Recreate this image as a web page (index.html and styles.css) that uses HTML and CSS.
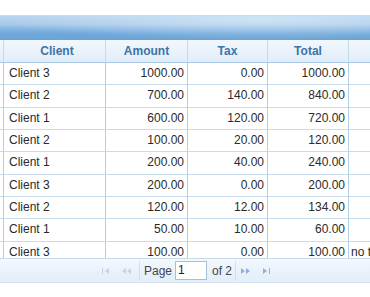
FILE: index.html
```html
<!DOCTYPE html>
<html>
<head>
<meta charset="utf-8">
<link rel="stylesheet" href="styles.css">
</head>
<body>
<div class="grid">
  <div class="caption"></div>
  <div class="hrow">
    <div class="hc c0"></div>
    <div class="hc c1">Client</div>
    <div class="hc c2">Amount</div>
    <div class="hc c3">Tax</div>
    <div class="hc c4">Total</div>
    <div class="hc c5"></div>
  </div>
  <div class="body">
    <div class="row"><div class="c c0"></div><div class="c c1">Client 3</div><div class="c c2">1000.00</div><div class="c c3">0.00</div><div class="c c4">1000.00</div><div class="c c5"></div></div>
    <div class="row"><div class="c c0"></div><div class="c c1">Client 2</div><div class="c c2">700.00</div><div class="c c3">140.00</div><div class="c c4">840.00</div><div class="c c5"></div></div>
    <div class="row"><div class="c c0"></div><div class="c c1">Client 1</div><div class="c c2">600.00</div><div class="c c3">120.00</div><div class="c c4">720.00</div><div class="c c5"></div></div>
    <div class="row"><div class="c c0"></div><div class="c c1">Client 2</div><div class="c c2">100.00</div><div class="c c3">20.00</div><div class="c c4">120.00</div><div class="c c5"></div></div>
    <div class="row"><div class="c c0"></div><div class="c c1">Client 1</div><div class="c c2">200.00</div><div class="c c3">40.00</div><div class="c c4">240.00</div><div class="c c5"></div></div>
    <div class="row"><div class="c c0"></div><div class="c c1">Client 3</div><div class="c c2">200.00</div><div class="c c3">0.00</div><div class="c c4">200.00</div><div class="c c5"></div></div>
    <div class="row"><div class="c c0"></div><div class="c c1">Client 2</div><div class="c c2">120.00</div><div class="c c3">12.00</div><div class="c c4">134.00</div><div class="c c5"></div></div>
    <div class="row"><div class="c c0"></div><div class="c c1">Client 1</div><div class="c c2">50.00</div><div class="c c3">10.00</div><div class="c c4">60.00</div><div class="c c5"></div></div>
    <div class="row"><div class="c c0"></div><div class="c c1">Client 3</div><div class="c c2">100.00</div><div class="c c3">0.00</div><div class="c c4">100.00</div><div class="c c5">no tax at all</div></div>
  </div>
  <div class="pager">
    <div class="pg">
      <span class="ic dis"><svg width="10" height="8" viewBox="0 0 10 8"><rect x="1" y="1" width="1" height="6" fill="currentColor"/><path d="M8 1 L4 4 L8 7 Z" fill="currentColor"/></svg></span>
      <span class="ic dis"><svg width="12" height="8" viewBox="0 0 12 8"><path d="M6 1 L2 4 L6 7 Z M11 1 L7 4 L11 7 Z" fill="currentColor"/></svg></span>
      <span class="sep s1"></span>
      <span class="lbl">Page</span>
      <span class="inp">1</span>
      <span class="lbl">of 2</span>
      <span class="sep s2"></span>
      <span class="ic en"><svg width="12" height="8" viewBox="0 0 12 8"><path d="M1 1 L5 4 L1 7 Z M6 1 L10 4 L6 7 Z" fill="currentColor"/></svg></span>
      <span class="ic en"><svg width="10" height="8" viewBox="0 0 10 8"><path d="M2 1 L6 4 L2 7 Z" fill="currentColor"/><rect x="8" y="1" width="1" height="6" fill="currentColor"/></svg></span>
    </div>
  </div>
</div>
</body>
</html>
```
FILE: styles.css
```css
html, body {
  margin: 0;
  padding: 0;
  background: #ffffff;
}
body {
  width: 370px;
  height: 297px;
  overflow: hidden;
  font-family: "Liberation Sans", Arial, sans-serif;
  font-size: 12px;
}
.grid {
  margin-top: 15px;
  border-top: 1px solid #c9dcee;
}
.caption {
  height: 24px;
  background:
    radial-gradient(ellipse 260px 20px at 260px 4px, rgba(225,239,251,0.6), rgba(225,239,251,0) 100%),
    linear-gradient(to bottom, #b8d5ef 0%, #a6c9ea 35%, #84b5e1 55%, #6ea7d8 75%, #6aa4d6 100%);
}
.hrow {
  display: flex;
  height: 22px;
  border-bottom: 1px solid #a9c8e3;
  background: linear-gradient(to bottom, #f2f8fd 0%, #e9f2fb 50%, #dfedf9 100%);
}
.hc {
  box-sizing: border-box;
  border-right: 1px solid #c5dbec;
  font-weight: bold;
  color: #3f73a3;
  text-align: center;
  line-height: 22px;
  white-space: nowrap;
  overflow: hidden;
}
.c0 { width: 4px; flex: none; }
.c1 { width: 102px; flex: none; }
.c2 { width: 82px; flex: none; }
.c3 { width: 80px; flex: none; }
.c4 { width: 81px; flex: none; }
.c5 { flex: 1; border-right: none; }
.body {
  height: 195px;
  overflow: hidden;
}
.row {
  display: flex;
  height: 22.35px;
  box-sizing: border-box;
  border-bottom: 1px solid #c8dced;
}
.c {
  box-sizing: border-box;
  border-right: 1px solid #b3cfe6;
  color: #2a2a2a;
  line-height: 21px;
  white-space: nowrap;
  overflow: hidden;
}
.c1 { padding-left: 5px; }
.row .c2, .row .c3, .row .c4 { text-align: right; padding-right: 3px; }
.row .c5 { padding-left: 2px; border-right: none; }
.pager {
  height: 23px;
  border-top: 1px solid #c5dbec;
  border-bottom: 1px solid #d3e3f1;
  background: linear-gradient(to bottom, #f3f8fd 0%, #eaf2fb 50%, #e2eef9 100%);
  display: flex;
  justify-content: center;
}
.pg {
  display: flex;
  align-items: center;
  margin-left: 2px;
  color: #4a4a4a;
}
.ic {
  display: flex;
  align-items: center;
  justify-content: center;
  width: 20px;
  height: 16px;
}
.dis { color: #c3d3e5; }
.en { color: #8db3dd; }
.sep {
  width: 1px;
  height: 20px;
  background: #cfe0ef;
}
.s1 { margin: 0 4px 0 3px; }
.s2 { margin: 0 0 0 3px; }
.lbl {
  color: #454545;
  font-size: 12px;
}
.inp {
  box-sizing: border-box;
  width: 32px;
  height: 19px;
  margin: 0 5px 0 3px;
  border: 1px solid #a6bfd8;
  background: #fff;
  color: #222;
  line-height: 17px;
  padding-left: 2px;
}
```
